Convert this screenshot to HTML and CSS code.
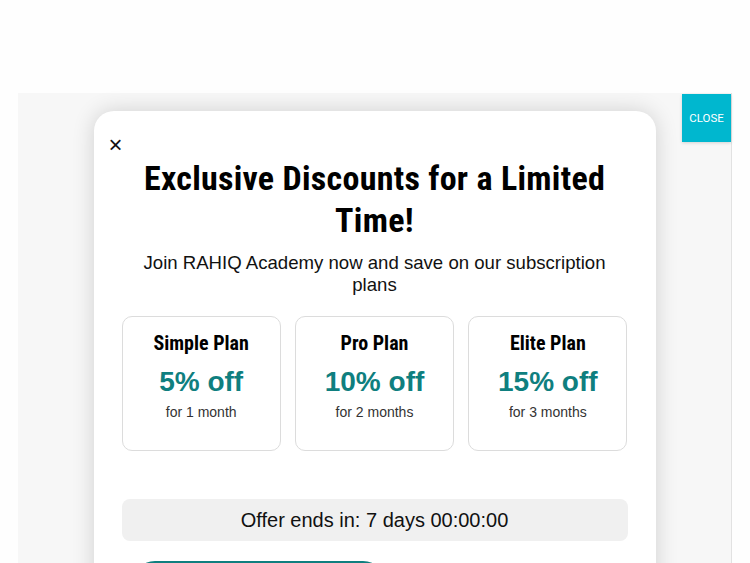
FILE: index.html
```html
<!DOCTYPE html>
<html lang="en">
<head>
<meta charset="utf-8">
<title>Exclusive Discounts</title>
<link rel="stylesheet" href="styles.css">
</head>
<body>
<div class="stage">
  <button class="close-btn" type="button">CLOSE</button>
  <div class="modal">
    <span class="modal-x">&times;</span>
    <h1 class="title">Exclusive Discounts for a Limited Time!</h1>
    <p class="subtitle">Join RAHIQ Academy now and save on our subscription plans</p>
    <div class="plans">
      <div class="plan">
        <h3 class="plan-name">Simple Plan</h3>
        <div class="plan-off">5% off</div>
        <div class="plan-term">for 1 month</div>
      </div>
      <div class="plan">
        <h3 class="plan-name">Pro Plan</h3>
        <div class="plan-off">10% off</div>
        <div class="plan-term">for 2 months</div>
      </div>
      <div class="plan">
        <h3 class="plan-name">Elite Plan</h3>
        <div class="plan-off">15% off</div>
        <div class="plan-term">for 3 months</div>
      </div>
    </div>
    <div class="timer">Offer ends in: 7 days 00:00:00</div>
    <div class="actions">
      <button class="cta" type="button">Subscribe Now</button>
    </div>
  </div>
</div>
</body>
</html>
```
FILE: styles.css
```css
html, body {
  margin: 0;
  padding: 0;
  height: 100%;
  overflow: hidden;
}
body {
  background: #fefefe;
  font-family: "Liberation Sans", Arial, sans-serif;
  padding-top: 93px;
  box-sizing: border-box;
}
.stage {
  position: relative;
  margin: 0 18px;
  height: 600px;
  background: #f7f7f7;
  border-right: 1px solid #e2e2e2;
  padding-top: 18px;
  box-sizing: border-box;
}
.close-btn {
  position: absolute;
  top: 1px;
  right: 0;
  width: 49px;
  height: 48px;
  border: 0;
  padding: 0;
  background: #00b7cf;
  color: #fff;
  font-family: Roboto, sans-serif;
  font-size: 11.5px;
  box-shadow: 0 1px 3px rgba(0,0,0,0.15);
}
.modal {
  position: relative;
  width: 562px;
  margin: 0 auto;
  background: #fff;
  border-radius: 20px;
  box-shadow: 0 0 22px rgba(0,0,0,0.16);
  padding: 46px 28px 30px;
  box-sizing: border-box;
  text-align: center;
}
.modal-x {
  position: absolute;
  top: 22px;
  left: 15px;
  font-size: 24px;
  line-height: 24px;
  color: #111;
}
.title {
  margin: 0;
  font-family: Roboto, sans-serif;
  font-stretch: 75%;
  font-size: 34px;
  line-height: 42px;
  font-weight: 700;
  letter-spacing: 0.28px;
  color: #000;
}
.subtitle {
  margin: 11px 0 0;
  font-size: 18.6px;
  line-height: 22px;
  color: #111;
}
.plans {
  display: flex;
  gap: 14px;
  margin-top: 20px;
}
.plan {
  flex: 1;
  border: 1px solid #dcdcdc;
  border-radius: 10px;
  padding: 14px 8px 29px;
}
.plan-name {
  margin: 0;
  font-family: Roboto, sans-serif;
  font-stretch: 75%;
  font-size: 20px;
  line-height: 24px;
  font-weight: 700;
  color: #000;
}
.plan-off {
  margin-top: 10px;
  font-size: 28px;
  line-height: 34px;
  font-weight: 700;
  color: #0f7f7f;
}
.plan-term {
  margin-top: 4px;
  font-size: 14px;
  line-height: 18px;
  color: #333;
}
.timer {
  margin-top: 48px;
  background: #f0f0f0;
  border-radius: 8px;
  height: 42px;
  line-height: 42px;
  font-size: 20px;
  color: #111;
}
.actions {
  display: flex;
  margin-top: 20px;
  padding: 0 10px;
}
.cta {
  width: 254px;
  height: 46px;
  border: 0;
  border-radius: 23px;
  background: #0f7f7f;
  color: #fff;
  font-size: 18px;
  font-family: "Liberation Sans", sans-serif;
}
```
